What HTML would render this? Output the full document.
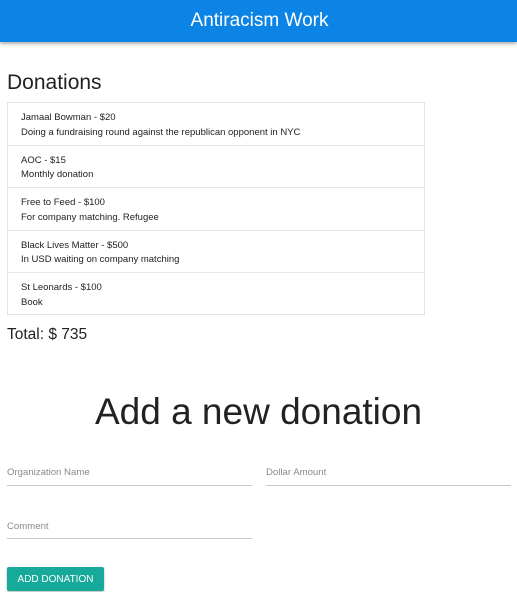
<!DOCTYPE html>
<html><head><style>
*{margin:0;padding:0;box-sizing:border-box}
body{width:517px;height:588px;overflow:hidden;background:#fff;font-family:"Liberation Sans",sans-serif;color:#222;position:relative}
.hdr{position:absolute;left:0;top:0;width:517px;height:42px;background:#0c84e6;box-shadow:0 2px 3px rgba(0,0,0,.3);color:#fff;font-size:19px;text-align:center;line-height:42px;padding-left:2px}
.a{position:absolute}
.list{position:absolute;left:7px;top:102px;width:418px;height:213px;border:1px solid #e3e3e3}
.it{height:42.6px;border-bottom:1px solid #e8e8e8;padding:8px 0 0 13px;font-size:9.5px;line-height:14.5px;color:#222}
.it:last-child{border-bottom:none}
.lbl{position:absolute;font-size:9.6px;color:#8a8a8a}
.ln{position:absolute;height:1px;background:#c8c8c8}
.btn{position:absolute;left:7px;top:567px;width:97px;height:24px;background:#17a99a;color:#fff;font-size:10px;text-align:center;line-height:25px;border-radius:2px;box-shadow:0 1px 2px rgba(0,0,0,.3)}
</style></head><body>
<div class="hdr">Antiracism Work</div>
<div class="a" style="left:7px;top:71px;font-size:21px;color:#222">Donations</div>
<div class="list">
<div class="it">Jamaal Bowman - $20<br>Doing a fundraising round against the republican opponent in NYC</div>
<div class="it">AOC - $15<br>Monthly donation</div>
<div class="it">Free to Feed - $100<br>For company matching. Refugee</div>
<div class="it">Black Lives Matter - $500<br>In USD waiting on company matching</div>
<div class="it">St Leonards - $100<br>Book</div>
</div>
<div class="a" style="left:7px;top:326px;font-size:15.5px">Total: $ 735</div>
<div class="a" style="left:0;width:517px;text-align:center;top:391px;font-size:37px;color:#222">Add a new donation</div>
<div class="lbl" style="left:7px;top:467px">Organization Name</div>
<div class="ln" style="left:7px;top:485px;width:245px"></div>
<div class="lbl" style="left:266px;top:467px">Dollar Amount</div>
<div class="ln" style="left:266px;top:485px;width:245px"></div>
<div class="lbl" style="left:7px;top:521px">Comment</div>
<div class="ln" style="left:7px;top:538px;width:245px"></div>
<div class="btn">ADD DONATION</div>
</body></html>
